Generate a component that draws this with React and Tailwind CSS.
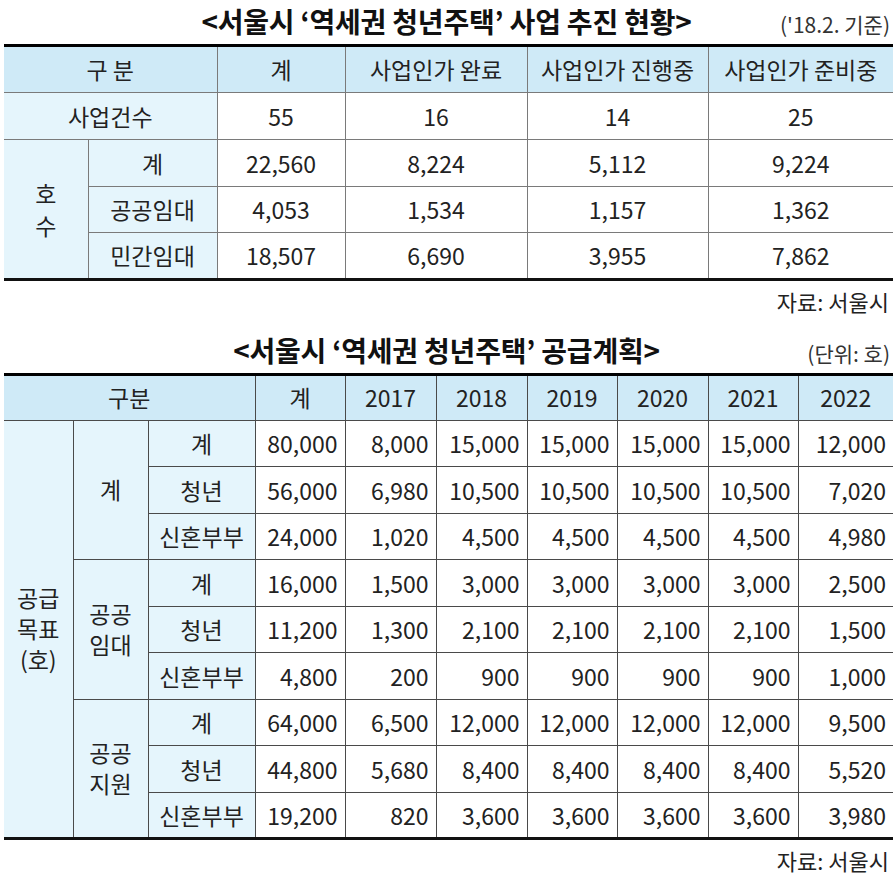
const font = { fontFamily: '"Noto Sans CJK KR", "Noto Sans", sans-serif' };

const statusRows = [
  { label: "계", values: ["22,560", "8,224", "5,112", "9,224"] },
  { label: "공공임대", values: ["4,053", "1,534", "1,157", "1,362"] },
  { label: "민간임대", values: ["18,507", "6,690", "3,955", "7,862"] },
];

const planGroups = [
  {
    name: ["계"],
    rows: [
      { label: "계", values: ["80,000", "8,000", "15,000", "15,000", "15,000", "15,000", "12,000"] },
      { label: "청년", values: ["56,000", "6,980", "10,500", "10,500", "10,500", "10,500", "7,020"] },
      { label: "신혼부부", values: ["24,000", "1,020", "4,500", "4,500", "4,500", "4,500", "4,980"] },
    ],
  },
  {
    name: ["공공", "임대"],
    rows: [
      { label: "계", values: ["16,000", "1,500", "3,000", "3,000", "3,000", "3,000", "2,500"] },
      { label: "청년", values: ["11,200", "1,300", "2,100", "2,100", "2,100", "2,100", "1,500"] },
      { label: "신혼부부", values: ["4,800", "200", "900", "900", "900", "900", "1,000"] },
    ],
  },
  {
    name: ["공공", "지원"],
    rows: [
      { label: "계", values: ["64,000", "6,500", "12,000", "12,000", "12,000", "12,000", "9,500"] },
      { label: "청년", values: ["44,800", "5,680", "8,400", "8,400", "8,400", "8,400", "5,520"] },
      { label: "신혼부부", values: ["19,200", "820", "3,600", "3,600", "3,600", "3,600", "3,980"] },
    ],
  },
];

const years = ["계", "2017", "2018", "2019", "2020", "2021", "2022"];

function TitleRow({ title, note }) {
  return (
    <div className="grid grid-cols-[1fr_auto_1fr] items-end h-[44px] pb-[9px]">
      <div />
      <h2 className="text-[28px] font-bold text-[#111] leading-none tracking-[-0.2px]">{title}</h2>
      <div className="text-right text-[21px] text-[#333] leading-none pr-[3px]">{note}</div>
    </div>
  );
}

function StatusTable() {
  const head = "bg-[#cfeaf7] border-l border-b border-[#7a7a7a] text-center font-normal";
  const label = "bg-[#e5f5fc] border-l border-b border-[#7a7a7a] text-center";
  const cell = "border-l border-b border-[#7a7a7a] text-center";
  return (
    <table className="ml-[4px] w-[889px] border-collapse border-t-[3px] border-b-[3px] border-t-black border-b-[#111] table-fixed">
      <colgroup>
        <col className="w-[84px]" />
        <col className="w-[129px]" />
        <col className="w-[128px]" />
        <col className="w-[182px]" />
        <col className="w-[181px]" />
        <col className="w-[185px]" />
      </colgroup>
      <tbody>
        <tr className="h-[47px]">
          <th colSpan={2} className={head + " border-l-0"}>구 분</th>
          <th className={head}>계</th>
          <th className={head}>사업인가 완료</th>
          <th className={head}>사업인가 진행중</th>
          <th className={head}>사업인가 준비중</th>
        </tr>
        <tr className="h-[47px]">
          <td colSpan={2} className={label + " border-l-0"}>사업건수</td>
          <td className={cell}>55</td>
          <td className={cell}>16</td>
          <td className={cell}>14</td>
          <td className={cell}>25</td>
        </tr>
        {statusRows.map((r, i) => (
          <tr key={r.label} className="h-[46.5px]">
            {i === 0 && (
              <td rowSpan={3} className={label + " border-l-0 leading-[32px]"}>
                호<br />수
              </td>
            )}
            <td className={label}>{r.label}</td>
            {r.values.map((v, j) => (
              <td key={j} className={cell}>{v}</td>
            ))}
          </tr>
        ))}
      </tbody>
    </table>
  );
}

function PlanTable() {
  const line = "border-[#4a4a4a]";
  const head = `bg-[#cfeaf7] border-l border-b ${line} text-center font-normal`;
  const label = `bg-[#e5f5fc] border-l border-b ${line} text-center`;
  const cell = `border-l border-b ${line} text-right pr-[7px]`;
  return (
    <table className="ml-[4px] w-[889px] border-collapse border-t-[3px] border-b-[3px] border-t-black border-b-[#111] table-fixed">
      <colgroup>
        <col className="w-[69px]" />
        <col className="w-[75px]" />
        <col className="w-[107px]" />
        <col className="w-[90px]" />
        <col className="w-[91px]" />
        <col className="w-[91px]" />
        <col className="w-[90px]" />
        <col className="w-[91px]" />
        <col className="w-[90px]" />
        <col className="w-[95px]" />
      </colgroup>
      <tbody>
        <tr className="h-[46px]">
          <th colSpan={3} className={head + " border-l-0"}>구분</th>
          {years.map((y) => (
            <th key={y} className={head}>{y}</th>
          ))}
        </tr>
        {planGroups.map((g, gi) =>
          g.rows.map((r, ri) => (
            <tr key={gi + "-" + ri} className="h-[46.5px]">
              {gi === 0 && ri === 0 && (
                <td rowSpan={9} className={label + " border-l-0 leading-[31px]"}>
                  공급<br />목표<br />(호)
                </td>
              )}
              {ri === 0 && (
                <td rowSpan={3} className={label + " leading-[31px]"}>
                  {g.name.map((n, k) => (
                    <div key={k}>{n}</div>
                  ))}
                </td>
              )}
              <td className={label}>{r.label}</td>
              {r.values.map((v, j) => (
                <td key={j} className={cell}>{v}</td>
              ))}
            </tr>
          ))
        )}
      </tbody>
    </table>
  );
}

export default function App() {
  return (
    <div className="w-[893px] h-[881px] bg-white text-[#222] text-[23px] overflow-hidden" style={font}>
      <TitleRow title="<서울시 ‘역세권 청년주택’ 사업 추진 현황>" note="('18.2. 기준)" />
      <StatusTable />
      <div className="text-right text-[22px] pr-[4px] h-[48px] leading-[40px]">자료: 서울시</div>
      <TitleRow title="<서울시 ‘역세권 청년주택’ 공급계획>" note="(단위: 호)" />
      <PlanTable />
      <div className="text-right text-[22px] pr-[4px] leading-[40px]">자료: 서울시</div>
    </div>
  );
}
